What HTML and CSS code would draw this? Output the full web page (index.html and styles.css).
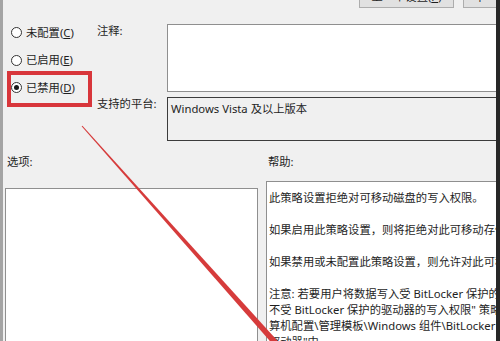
FILE: index.html
```html
<!DOCTYPE html>
<html lang="zh-CN">
<head>
<meta charset="utf-8">
<title>已禁用</title>
<link rel="stylesheet" href="styles.css">
</head>
<body>
<div class="window">
  <div class="dialog">
    <div class="top">
      <div class="states">
        <div class="radio"><span class="circle"></span><span>未配置(<u>C</u>)</span></div>
        <div class="radio"><span class="circle"></span><span>已启用(<u>E</u>)</span></div>
        <div class="radio"><span class="circle checked"></span><span>已禁用(<u>D</u>)</span></div>
      </div>
      <div class="fields">
        <div class="toolbar">
          <button class="btn">上一个设置(<u>P</u>)</button>
          <button class="btn">下一个设置(<u>N</u>)</button>
        </div>
        <div class="grid">
          <div class="flabel">注释:</div>
          <div class="comment"></div>
          <div class="flabel">支持的平台:</div>
          <div class="platform">Windows Vista 及以上版本</div>
        </div>
      </div>
    </div>
    <div class="bottom">
      <div class="pane options">
        <div class="plabel">选项:</div>
        <div class="box optbox"></div>
      </div>
      <div class="pane help">
        <div class="plabel">帮助:</div>
        <div class="box helpbox">
          <p>此策略设置拒绝对可移动磁盘的写入权限。</p>
          <p>如果启用此策略设置，则将拒绝对此可移动存储类的写入权限。</p>
          <p>如果禁用或未配置此策略设置，则允许对此可移动存储类的写入权限。</p>
          <p>注意: 若要用户将数据写入受 BitLocker 保护的存储，请启用"拒绝对<br>不受 BitLocker 保护的驱动器的写入权限" 策略设置，该设置位于"计<br>算机配置\管理模板\Windows 组件\BitLocker 驱动器加密\可移动数据<br>驱动器"中。</p>
        </div>
      </div>
    </div>
  </div>
  <div class="edge"></div>
</div>
<div class="highlight"></div>
<svg class="arrow" width="500" height="341" viewBox="0 0 500 341">
  <polygon points="81.6,126.3 82.4,125.7 282.2,346 277.8,350" fill="#d63b3b"/>
</svg>
</body>
</html>
```

FILE: styles.css
```css
html, body {
  margin: 0;
  padding: 0;
}
body {
  width: 500px;
  height: 341px;
  overflow: hidden;
  position: relative;
  background: #f0f0f0;
  font-family: "Noto Sans", "Noto Sans CJK SC", sans-serif;
  font-size: 11.3px;
  color: #1e1e1e;
}
.window {
  display: flex;
  width: 500px;
  height: 341px;
  overflow: hidden;
}
.dialog {
  flex: 1;
  min-width: 0;
  border-left: 3px solid #a4a4a4;
  background: #f0f0f0;
  overflow: hidden;
  display: flex;
  flex-direction: column;
}
.edge {
  width: 4px;
  background: #272727;
  flex: none;
}
.top {
  display: flex;
  height: 138px;
  flex: none;
}
.states {
  width: 92px;
  flex: none;
  padding-top: 19px;
  box-sizing: border-box;
}
.radio {
  height: 27.5px;
  display: flex;
  align-items: center;
  padding-left: 8px;
  gap: 4px;
  line-height: 14px;
  white-space: nowrap;
}
.circle {
  width: 11px;
  height: 11px;
  box-sizing: border-box;
  border: 1px solid #333;
  border-radius: 50%;
  background: #fff;
  display: flex;
  align-items: center;
  justify-content: center;
  flex: none;
}
.circle.checked::after {
  content: "";
  width: 5px;
  height: 5px;
  border-radius: 50%;
  background: #1a1a1a;
}
.fields {
  flex: none;
  width: 420px;
}
.toolbar {
  height: 8px;
  display: flex;
  gap: 9px;
  padding-left: 264px;
}
.btn {
  flex: none;
  width: 95px;
  height: 23px;
  margin-top: -15px;
  box-sizing: border-box;
  border: 1px solid #adadad;
  background: #e1e1e1;
  font: inherit;
  color: #1e1e1e;
  padding: 0;
  line-height: 14px;
}
.grid {
  margin-top: 16px;
  display: grid;
  grid-template-columns: 72px 360px;
  grid-template-rows: 68px 44px;
  row-gap: 5px;
}
.flabel {
  padding-left: 2px;
  line-height: 13px;
  white-space: nowrap;
}
.comment {
  background: #fff;
  border: 1px solid #8f8f8f;
}
.platform {
  background: #f0f0f0;
  border: 1px solid #3c3c3c;
  padding: 4px 3px;
  line-height: 14px;
  white-space: nowrap;
}
.bottom {
  display: flex;
  gap: 8px;
  padding-left: 2px;
  flex: 1;
}
.pane {
  flex: none;
  display: flex;
  flex-direction: column;
}
.options {
  width: 253px;
}
.help {
  width: 300px;
}
.plabel {
  margin-top: 17px;
  padding-left: 2px;
  line-height: 14px;
  height: 14px;
}
.box {
  background: #fff;
  border: 1px solid #8f8f8f;
  height: 200px;
  box-sizing: border-box;
}
.optbox {
  margin-top: 19px;
}
.helpbox {
  margin-top: 12px;
  padding: 8px 2px;
  line-height: 16px;
  white-space: nowrap;
  overflow: hidden;
}
.helpbox p {
  margin: 0 0 16px;
}
.highlight {
  position: absolute;
  left: 7px;
  top: 71px;
  width: 85px;
  height: 36px;
  box-sizing: border-box;
  border: 4px solid #d8363b;
}
.arrow {
  position: absolute;
  left: 0;
  top: 0;
  pointer-events: none;
}
```
